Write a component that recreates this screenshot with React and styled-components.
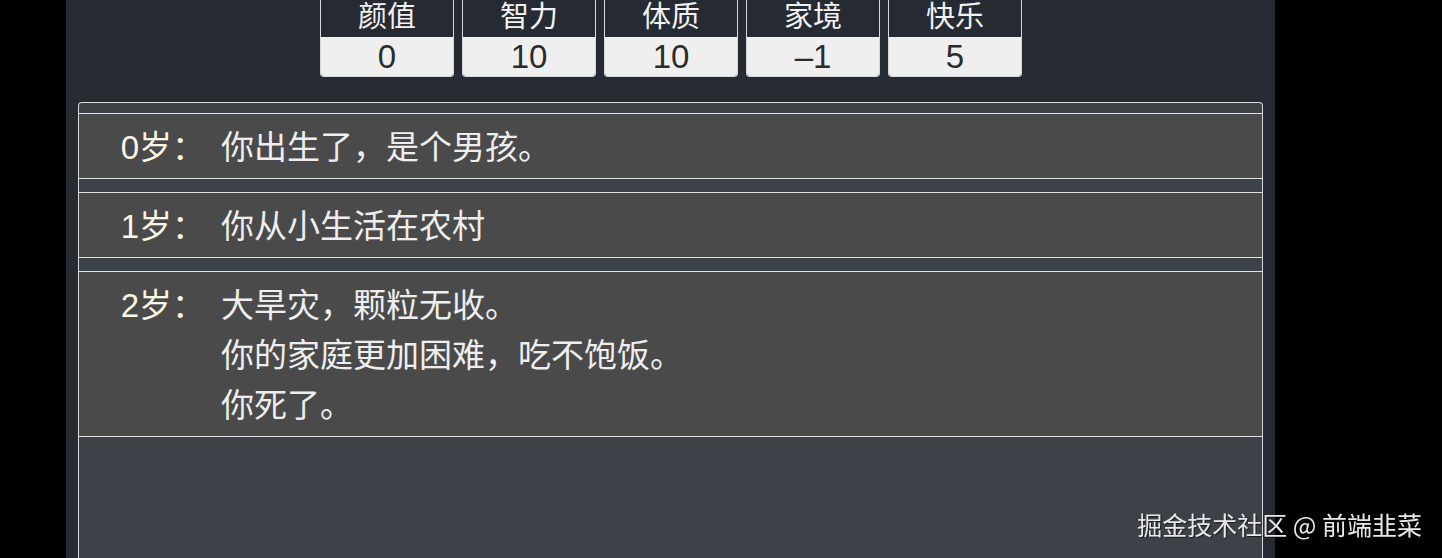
import React from "react";
import styled, { createGlobalStyle } from "styled-components";

const GlobalStyle = createGlobalStyle`
  html, body {
    margin: 0;
    padding: 0;
    background: #000;
    height: 100%;
    overflow: hidden;
  }
  body {
    font-family: "Liberation Sans", "Noto Sans CJK SC", sans-serif;
  }
`;

const Page = styled.div`
  display: flex;
  height: 558px;
  background: #000;
  padding-left: 66px;
  box-sizing: border-box;
`;

const Column = styled.main`
  width: 1209px;
  height: 100%;
  background: #262a33;
  padding: 0 12px;
  box-sizing: border-box;
  display: flex;
  flex-direction: column;
  overflow: hidden;
`;

const StatBar = styled.div`
  display: flex;
  justify-content: center;
  gap: 8px;
  padding-left: 1px;
`;

const Stat = styled.div`
  width: 134px;
  display: flex;
  flex-direction: column;
  border: 1px solid #d8d8d8;
  border-top: none;
  border-radius: 0 0 4px 4px;
  box-sizing: border-box;
  overflow: hidden;
`;

const StatLabel = styled.div`
  height: 37px;
  line-height: 35px;
  text-align: center;
  color: #f2f2f2;
  font-size: 29px;
  background: #262a33;
`;

const StatValue = styled.div`
  height: 39px;
  line-height: 39px;
  text-align: center;
  color: #2b2b2b;
  font-size: 33px;
  background: #efefef;
`;

const Log = styled.ul`
  list-style: none;
  margin: 25px 0 0;
  padding: 10px 0 0;
  flex: 1;
  border: 1px solid #d9d9d9;
  border-bottom: none;
  border-radius: 4px 4px 0 0;
  background: #3d4148;
  display: flex;
  flex-direction: column;
  gap: 13px;
`;

const Entry = styled.li`
  display: flex;
  background: #4a4a4a;
  border-top: 1px solid #e0e0e0;
  border-bottom: 1px solid #e0e0e0;
  padding: 9px 0 5px;
  font-size: 33px;
  line-height: 50px;
`;

const Age = styled.div`
  width: 126px;
  flex: none;
  text-align: right;
  color: #fbf8e6;
`;

const Events = styled.div`
  margin-left: 16px;
  display: flex;
  flex-direction: column;
  color: #eeeeee;
`;

const Mark = styled.div`
  position: fixed;
  right: 20px;
  bottom: 16px;
  color: #e8e8e8;
  font-size: 25px;
  font-family: "Noto Sans CJK SC", sans-serif;
  text-shadow: 1px 1px 1px rgba(0, 0, 0, 0.6);
`;

const stats = [
  ["颜值", "0"],
  ["智力", "10"],
  ["体质", "10"],
  ["家境", "–1"],
  ["快乐", "5"],
];

const entries = [
  ["0岁：", ["你出生了，是个男孩。"]],
  ["1岁：", ["你从小生活在农村"]],
  ["2岁：", ["大旱灾，颗粒无收。", "你的家庭更加困难，吃不饱饭。", "你死了。"]],
];

export default function App() {
  return (
    <>
      <GlobalStyle />
      <Page>
        <Column>
          <StatBar>
            {stats.map(([label, value]) => (
              <Stat key={label}>
                <StatLabel>{label}</StatLabel>
                <StatValue>{value}</StatValue>
              </Stat>
            ))}
          </StatBar>
          <Log>
            {entries.map(([age, lines]) => (
              <Entry key={age}>
                <Age>{age}</Age>
                <Events>
                  {lines.map((l) => (
                    <span key={l}>{l}</span>
                  ))}
                </Events>
              </Entry>
            ))}
          </Log>
        </Column>
      </Page>
      <Mark>掘金技术社区 @ 前端韭菜</Mark>
    </>
  );
}
